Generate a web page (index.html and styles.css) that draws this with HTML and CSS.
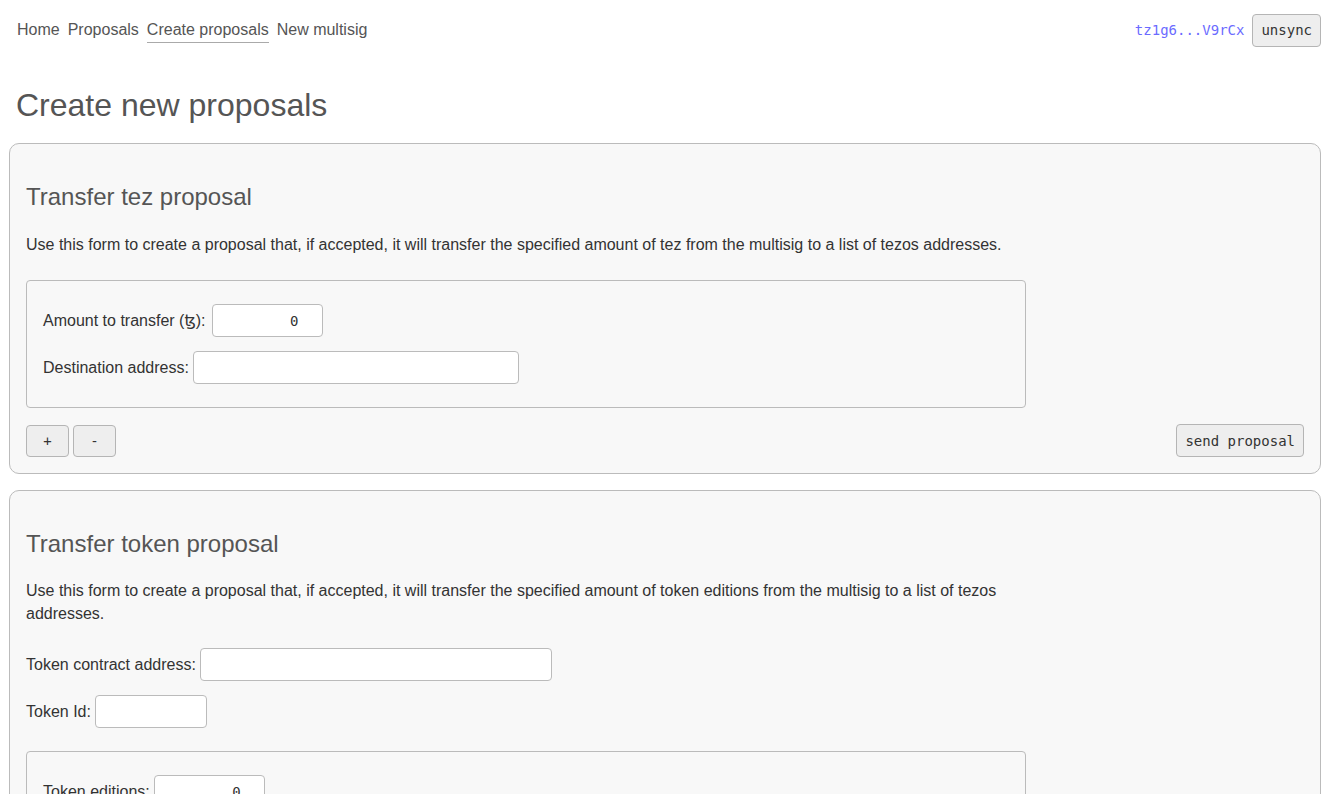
FILE: index.html
```html
<!DOCTYPE html>
<html>
<head>
<meta charset="utf-8">
<link rel="stylesheet" href="styles.css">
</head>
<body>
<header class="topbar">
  <nav class="nav">
    <a class="nav-link">Home</a>
    <a class="nav-link">Proposals</a>
    <a class="nav-link active">Create proposals</a>
    <a class="nav-link">New multisig</a>
  </nav>
  <div class="wallet">
    <a class="address">tz1g6...V9rCx</a>
    <button class="btn">unsync</button>
  </div>
</header>
<main>
  <h1 class="page-title">Create new proposals</h1>

  <section class="card">
    <h2 class="card-title">Transfer tez proposal</h2>
    <p class="desc">Use this form to create a proposal that, if accepted, it will transfer the specified amount of tez from the multisig to a list of tezos addresses.</p>
    <div class="subform">
      <div class="row"><label class="wider"><span>Amount to transfer (ꜩ):</span><input class="num" type="text" value="0"></label></div>
      <div class="row"><label><span>Destination address:</span><input class="addr" type="text"></label></div>
    </div>
    <div class="actions">
      <div class="left">
        <button class="btn small">+</button>
        <button class="btn small">-</button>
      </div>
      <button class="btn">send proposal</button>
    </div>
  </section>

  <section class="card">
    <h2 class="card-title">Transfer token proposal</h2>
    <p class="desc tight">Use this form to create a proposal that, if accepted, it will transfer the specified amount of token editions from the multisig to a list of tezos addresses.</p>
    <div class="row"><label><span>Token contract address:</span><input class="addr wide" type="text"></label></div>
    <div class="row"><label><span>Token Id:</span><input class="num short" type="text"></label></div>
    <div class="subform second">
      <div class="row"><label><span>Token editions:</span><input class="num" type="text" value="0"></label></div>
      <div class="row"><label><span>Destination address:</span><input class="addr" type="text"></label></div>
    </div>
  </section>
</main>
</body>
</html>
```
FILE: styles.css
```css
* { box-sizing: border-box; }
html, body { margin: 0; background: #fff; }
body {
  padding: 0 8px 40px 9px;
  font-family: "Liberation Sans", Arial, "DejaVu Sans", sans-serif;
  font-size: 16px;
  color: #333;
}
.topbar {
  display: flex;
  justify-content: space-between;
  align-items: center;
  padding-top: 14px;
  height: 46px;
}
.nav {
  display: flex;
  gap: 8px;
  padding-left: 8px;
  align-self: flex-start;
  padding-top: 7px;
}
.nav-link {
  color: #555;
  text-decoration: none;
  line-height: 18px;
  padding-bottom: 3px;
  border-bottom: 1px solid transparent;
}
.nav-link.active { border-bottom-color: #aaa; }
.wallet {
  display: flex;
  align-items: center;
  gap: 8px;
}
.address {
  font-family: "DejaVu Sans Mono", monospace;
  font-size: 14px;
  color: #6b6bff;
}
.btn {
  font-family: "DejaVu Sans Mono", monospace;
  font-size: 14px;
  color: #333;
  background: #eee;
  border: 1px solid #b5b5b5;
  border-radius: 4px;
  height: 33px;
  padding: 0 8px;
  min-width: 43px;
}
.wallet .btn { min-width: 68px; }
.page-title {
  font-size: 32px;
  font-weight: normal;
  color: #555;
  margin: 41px 0 19px 7px;
  line-height: 37px;
}
.card {
  background: #f8f8f8;
  border: 1px solid #bbb;
  border-radius: 10px;
  padding: 16px;
  margin-bottom: 16px;
}
.card-title {
  font-size: 24px;
  font-weight: normal;
  color: #555;
  margin: 23px 0 0;
  line-height: 28px;
}
.desc {
  max-width: 1000px;
  margin: 22px 0 24px;
  line-height: 23px;
}
.desc.tight { margin: 21px 0 23px; }
.subform {
  width: 1000px;
  border: 1px solid #bbb;
  border-radius: 4px;
  padding: 23px 16px;
  display: flex;
  flex-direction: column;
  gap: 14px;
}
.card > .row { margin-bottom: 14px; }
.card > .row + .subform.second { margin-top: 23px; }
.row label { display: inline-flex; align-items: center; gap: 4px; }
.row label.wider { gap: 6px; }
input {
  height: 33px;
  border: 1px solid #bbb;
  border-radius: 4px;
  background: #fff;
  font-family: "DejaVu Sans Mono", monospace;
  font-size: 14px;
  color: #333;
  padding: 0 6px;
}
input.num { width: 111px; text-align: right; padding-right: 23px; }
input.short { width: 112px; }
input.addr { width: 326px; }
input.wide { width: 352px; }
.actions {
  display: flex;
  justify-content: space-between;
  align-items: center;
  margin-top: 16px;
}
.left { display: flex; gap: 4px; }
.btn.small { height: 32px; }
```
